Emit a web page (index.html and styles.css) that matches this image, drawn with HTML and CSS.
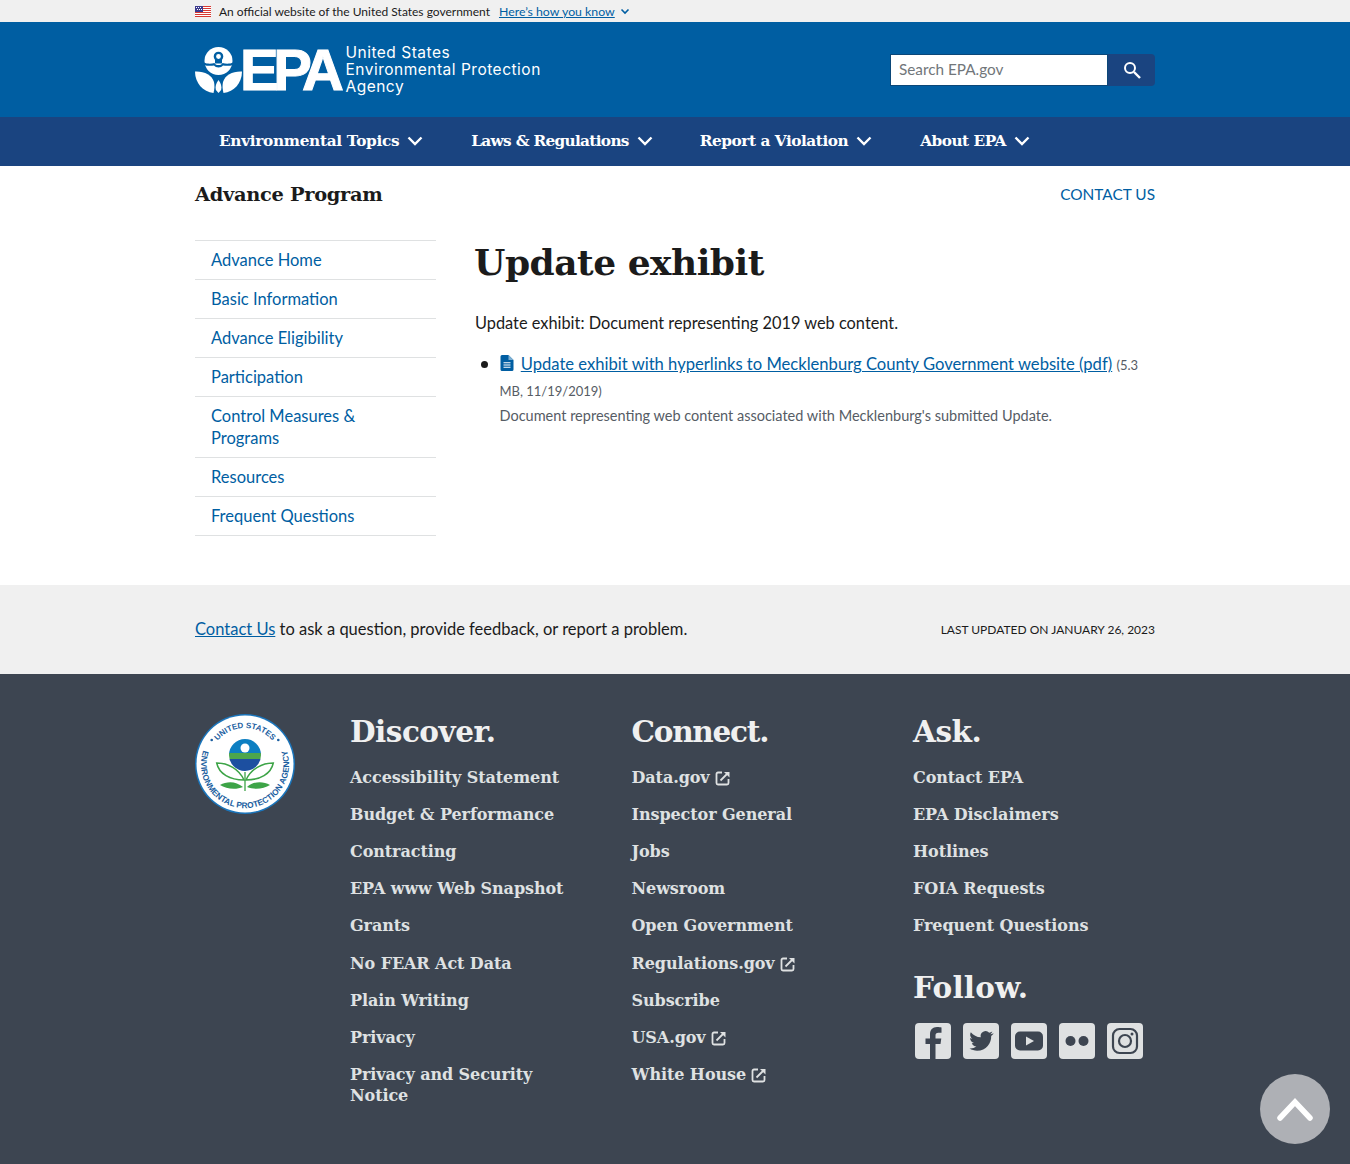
FILE: index.html
```html
<!DOCTYPE html>
<html lang="en">

<head>
    <meta charset="utf-8">
    <title>Update exhibit | Advance Program | US EPA</title>
    <link rel="stylesheet" href="styles.css">
</head>

<body>
    <div class="gov-banner">
        <div class="wrap gov-inner">
            <svg class="flag" width="16" height="11" viewBox="0 0 16 11">
                <rect width="16" height="11" fill="#fff"/>
                <path d="M0 0h16v1H0zM0 2h16v1H0zM0 4h16v1H0zM0 6h16v1H0zM0 8h16v1H0zM0 10h16v1H0z" fill="#d83933"/>
                <rect width="8" height="6" fill="#3c3b8e"/>
                <path d="M1 1h1v1H1zM3 1h1v1H3zM5 1h1v1H5zM2 3h1v1H2zM4 3h1v1H4zM6 3h1v1H6z" fill="#fff"/>
            </svg>
            <span class="gov-text">An official website of the United States government</span>
            <a class="gov-link" href="#">Here’s how you know</a>
            <svg class="gov-caret" width="10" height="10" viewBox="0 0 10 10"><path d="M1.500 3.500 5 7l3.500-3.500" fill="none" stroke="#005ea2" stroke-width="1.600"/></svg>
        </div>
    </div>

    <header class="site-header">
        <div class="wrap header-inner">
            <a class="logo" href="#">
                <svg class="logo-mark" width="47" height="46" viewBox="0 0 47 46">
                    <circle cx="23.500" cy="14" r="14" fill="#fff"/>
                    <path d="M9 15.500c3 1.500 7 1.500 10.500.5.800 1.500 1.500 2 4 2s3.200-.5 4-2c3.500 1 7.500 1 10.500-.5v2.500c-3 1-7 1-10 .5-1 1.300-2.500 2-4.500 2s-3.500-.7-4.500-2c-3 .5-7 .5-10-.5z" fill="#005ea2"/>
                    <circle cx="23.500" cy="9.500" r="3.600" fill="none" stroke="#005ea2" stroke-width="2.400"/>
                    <path d="M20 13h7v3.500h-7z" fill="#005ea2"/>
                    <path d="M0 24.500c9-.5 17 3.500 19 10.500.800 3.500.500 7.500-.500 11C8 45 0 36 0 24.500z" fill="#fff"/>
                    <path d="M47 24.500c-9-.5-17 3.500-19 10.500-.8 3.500-.5 7.500.5 11C39 45 47 36 47 24.500z" fill="#fff"/>
                    <path d="M23.500 33c2.500 3 3.500 7 2.600 10l-2.600 3-2.600-3c-.9-3 .1-7 2.600-10z" fill="#fff"/>
                </svg>
                <span class="logo-epa">EPA</span>
                <span class="logo-name">United States<br>Environmental Protection<br>Agency</span>
            </a>
            <form class="search">
                <input class="search-input" type="text" placeholder="Search EPA.gov">
                <button class="search-btn" type="button" aria-label="Search">
                    <svg width="20" height="20" viewBox="0 0 20 20"><circle cx="8" cy="8" r="5" fill="none" stroke="#fff" stroke-width="2"/><path d="m12 12 6 6" stroke="#fff" stroke-width="2.400"/></svg>
                </button>
            </form>
        </div>
    </header>

    <nav class="main-nav">
        <div class="wrap nav-inner">
            <a class="nav-item nav-topics" href="#">Environmental Topics<svg width="16" height="10" viewBox="0 0 16 10"><path d="m1.500 1.500 6.500 6.500 6.500-6.500" fill="none" stroke="#fff" stroke-width="2.400"/></svg></a>
            <a class="nav-item nav-laws" href="#">Laws &amp; Regulations<svg width="16" height="10" viewBox="0 0 16 10"><path d="m1.500 1.500 6.500 6.500 6.500-6.500" fill="none" stroke="#fff" stroke-width="2.400"/></svg></a>
            <a class="nav-item nav-report" href="#">Report a Violation<svg width="16" height="10" viewBox="0 0 16 10"><path d="m1.500 1.500 6.500 6.500 6.500-6.500" fill="none" stroke="#fff" stroke-width="2.400"/></svg></a>
            <a class="nav-item nav-about" href="#">About EPA<svg width="16" height="10" viewBox="0 0 16 10"><path d="m1.500 1.500 6.500 6.500 6.500-6.500" fill="none" stroke="#fff" stroke-width="2.400"/></svg></a>
        </div>
    </nav>

    <div class="wrap program-bar">
        <div class="program-name">Advance Program</div>
        <a class="program-contact" href="#">CONTACT US</a>
    </div>

    <div class="wrap page-body">
        <ul class="side-nav">
            <li><a href="#">Advance Home</a></li>
            <li><a href="#">Basic Information</a></li>
            <li><a href="#">Advance Eligibility</a></li>
            <li><a href="#">Participation</a></li>
            <li><a href="#">Control Measures &amp; Programs</a></li>
            <li><a href="#">Resources</a></li>
            <li><a href="#">Frequent Questions</a></li>
        </ul>
        <main class="content">
            <h1>Update exhibit</h1>
            <p class="lead">Update exhibit: Document representing 2019 web content.</p>
            <ul class="doc-list">
                <li>
                    <svg class="pdf-icon" width="14" height="16" viewBox="0 0 14 16">
                        <path d="M2 0h6.500L13.500 5v9.500a1.500 1.500 0 0 1-1.500 1.500H2A1.500 1.500 0 0 1 .5 14.500V1.500A1.500 1.500 0 0 1 2 0z" fill="#005ea2"/>
                        <path d="M8.500 0v5h5" fill="#7fb0d3"/>
                        <path d="M3.500 7.800h7M3.500 10h7M3.500 12.200h7" stroke="#fff" stroke-width="1.100"/>
                    </svg>
                    <a href="#">Update exhibit with hyperlinks to Mecklenburg County Government website (pdf)</a>
                    <span class="doc-meta">(5.3 MB, 11/19/2019)</span>
                    <div class="doc-desc">Document representing web content associated with Mecklenburg's submitted Update.</div>
                </li>
            </ul>
        </main>
    </div>

    <div class="contact-band">
        <div class="wrap contact-inner">
            <div class="contact-text"><a href="#">Contact Us</a> to ask a question, provide feedback, or report a problem.</div>
            <div class="updated">LAST UPDATED ON JANUARY 26, 2023</div>
        </div>
    </div>

    <footer class="site-footer">
        <div class="wrap footer-grid">
            <svg class="seal" width="100" height="100" viewBox="0 0 100 100">
                <circle cx="50" cy="50" r="50" fill="#1b75bb"/>
                <circle cx="50" cy="50" r="48.500" fill="#fff"/>
                <defs>
                    <path id="seal-top" d="M14 50A36 36 0 0 1 86 50"/>
                    <path id="seal-bottom" d="M8.700 35A44 44 0 1 0 91.300 35"/>
                    <clipPath id="globe-clip"><circle cx="50" cy="41" r="16"/></clipPath>
                </defs>
                <text class="seal-text"><textPath href="#seal-top" startOffset="50%" text-anchor="middle">UNITED STATES</textPath></text>
                <text class="seal-text seal-text-low"><textPath href="#seal-bottom" startOffset="50%" text-anchor="middle">ENVIRONMENTAL PROTECTION AGENCY</textPath></text>
                <circle cx="16.700" cy="26" r="1.300" fill="#1a5ea0"/>
                <circle cx="83.300" cy="26" r="1.300" fill="#1a5ea0"/>
                <g clip-path="url(#globe-clip)">
                    <rect x="34" y="25" width="32" height="15" fill="#0d7fc2"/>
                    <rect x="34" y="39" width="32" height="6" fill="#4ca64c"/>
                    <rect x="34" y="45" width="32" height="12" fill="#1c4fa0"/>
                </g>
                <circle cx="50" cy="34" r="4.500" fill="#fff"/>
                <path d="M49 66C44 55 33 49 21.700 49 24 60 35 66 49 66zM51 66C56 55 67 49 78.300 49 76 60 65 66 51 66z" fill="#fff" stroke="#3da447" stroke-width="1.500"/>
                <path d="M25 71c7-4 16-4 23 2-7 3-17 2-23-2zM75 71c-7-4-16-4-23 2 7 3 17 2 23-2z" fill="#3da447"/>
                <path d="M50 58v19" stroke="#3da447" stroke-width="1.300"/>
            </svg>
            <div class="footer-col">
                <h2>Discover.</h2>
                <a href="#">Accessibility Statement</a>
                <a href="#">Budget &amp; Performance</a>
                <a href="#">Contracting</a>
                <a href="#">EPA www Web Snapshot</a>
                <a href="#">Grants</a>
                <a href="#">No FEAR Act Data</a>
                <a href="#">Plain Writing</a>
                <a href="#">Privacy</a>
                <a href="#">Privacy and Security Notice</a>
            </div>
            <div class="footer-col">
                <h2 class="connect">Connect.</h2>
                <a href="#">Data.gov<svg class="ext" width="16" height="16" viewBox="0 0 16 16"><use href="#ext-icon"/></svg></a>
                <a href="#">Inspector General</a>
                <a href="#">Jobs</a>
                <a href="#">Newsroom</a>
                <a href="#">Open Government</a>
                <a href="#">Regulations.gov<svg class="ext" width="16" height="16" viewBox="0 0 16 16"><use href="#ext-icon"/></svg></a>
                <a href="#">Subscribe</a>
                <a href="#">USA.gov<svg class="ext" width="16" height="16" viewBox="0 0 16 16"><use href="#ext-icon"/></svg></a>
                <a href="#">White House<svg class="ext" width="16" height="16" viewBox="0 0 16 16"><use href="#ext-icon"/></svg></a>
            </div>
            <div class="footer-col">
                <h2>Ask.</h2>
                <a href="#">Contact EPA</a>
                <a href="#">EPA Disclaimers</a>
                <a href="#">Hotlines</a>
                <a href="#">FOIA Requests</a>
                <a href="#">Frequent Questions</a>
                <h2 class="follow">Follow.</h2>
                <div class="social">
                    <svg width="36" height="36" viewBox="0 0 36 36"><rect width="36" height="36" rx="4" fill="#dfe1e2"/><path d="M20.500 36V21h5l.8-5.500h-5.800v-3c0-1.800.8-2.800 2.800-2.800h3.200V4.500C25.500 4.300 24 4 22 4c-4.500 0-7 2.800-7 7.500v4h-4.500V21H15v15z" fill="#3d4551"/></svg>
                    <svg width="36" height="36" viewBox="0 0 36 36"><rect width="36" height="36" rx="4" fill="#dfe1e2"/><path d="M30 10.500c-.9.400-1.800.700-2.800.800 1-.6 1.800-1.600 2.100-2.700-.9.600-2 1-3.100 1.200a4.900 4.900 0 0 0-8.400 4.500C13.800 14.100 10.200 12.200 7.800 9.200c-1.300 2.200-.6 5.100 1.500 6.500-.8 0-1.500-.2-2.200-.6 0 2.300 1.600 4.400 3.900 4.900-.7.200-1.500.2-2.200.1.600 2 2.500 3.400 4.600 3.400A9.900 9.900 0 0 1 6.500 25.500c2.200 1.400 4.900 2.200 7.600 2.200 9.200 0 14.400-7.800 14.100-14.800 1-.7 1.800-1.500 2.500-2.400z" fill="#3d4551"/></svg>
                    <svg width="36" height="36" viewBox="0 0 36 36"><rect width="36" height="36" rx="4" fill="#dfe1e2"/><rect x="4" y="8.500" width="28" height="19" rx="5" fill="#3d4551"/><path d="m15 13.500 8 4.500-8 4.500z" fill="#dfe1e2"/></svg>
                    <svg width="36" height="36" viewBox="0 0 36 36"><rect width="36" height="36" rx="4" fill="#dfe1e2"/><circle cx="11.500" cy="18" r="5" fill="#3d4551"/><circle cx="24.500" cy="18" r="5" fill="#3d4551"/></svg>
                    <svg width="36" height="36" viewBox="0 0 36 36"><rect width="36" height="36" rx="4" fill="#dfe1e2"/><rect x="6" y="6" width="24" height="24" rx="6.500" fill="none" stroke="#3d4551" stroke-width="2.200"/><circle cx="18" cy="18" r="6" fill="none" stroke="#3d4551" stroke-width="2.200"/><circle cx="25" cy="11" r="1.500" fill="#3d4551"/></svg>
                </div>
            </div>
        </div>
        <svg class="icon-defs" width="0" height="0">
            <symbol id="ext-icon" viewBox="0 0 16 16">
                <path d="M7 2.500H3A1.500 1.500 0 0 0 1.500 4v9A1.500 1.500 0 0 0 3 14.500h9a1.500 1.500 0 0 0 1.500-1.500V9" fill="none" stroke="#dfe1e2" stroke-width="1.800"/>
                <path d="M5.500 10.500 12 4" fill="none" stroke="#dfe1e2" stroke-width="1.800"/>
                <path d="M9 2h5.500v5.500z" fill="#dfe1e2"/>
            </symbol>
        </svg>
    </footer>

    <a class="back-top" href="#" aria-label="Back to top">
        <svg width="36" height="24" viewBox="0 0 36 24"><path d="M3 21 18 5l15 16" fill="none" stroke="#fff" stroke-width="5.500" stroke-linecap="round"/></svg>
    </a>
</body>

</html>
```
FILE: styles.css
```css
* {
    box-sizing: border-box;
}

html,
body {
    margin: 0;
    padding: 0;
}

body {
    font-family: Lato, "Open Sans", sans-serif;
    font-size: 16.5px;
    color: #1b1b1b;
    background: #fff;
    height: 1164px;
    overflow: hidden;
}

a {
    color: #005ea2;
}

.wrap {
    width: 960px;
    margin: 0 auto;
}

/* gov banner */
.gov-banner {
    height: 22px;
    background: #f0f0f0;
}

.gov-inner {
    display: flex;
    align-items: center;
    height: 22px;
    font-size: 12px;
}

.flag {
    margin-right: 8px;
}

.gov-link {
    margin-left: 9px;
    font-size: 12.300px;
}

.gov-caret {
    margin-left: 5px;
}

/* header */
.site-header {
    height: 95px;
    background: #005ea2;
}

.header-inner {
    display: flex;
    align-items: center;
    justify-content: space-between;
    height: 95px;
}

.logo {
    display: flex;
    align-items: center;
    color: #fff;
    text-decoration: none;
}

.logo-epa {
    font-family: "Liberation Sans", sans-serif;
    font-weight: 700;
    font-size: 58px;
    line-height: 46px;
    letter-spacing: -5.500px;
    -webkit-text-stroke: 1px #fff;
    margin-left: -2px;
}

.logo-name {
    font-family: Inter, sans-serif;
    font-size: 15.500px;
    line-height: 17px;
    letter-spacing: .5px;
    margin-left: 7px;
}

.search {
    display: flex;
    height: 32px;
}

.search-input {
    width: 218px;
    height: 32px;
    border: 1px solid #0b4778;
    padding: 0 8px 1px;
    font-family: Lato, sans-serif;
    font-size: 15.300px;
    background: #fff;
}

.search-input::placeholder {
    color: #71767a;
}

.search-btn {
    width: 47px;
    height: 32px;
    border: 0;
    padding: 0;
    background: #1a4480;
    border-radius: 0 4px 4px 0;
    display: flex;
    align-items: center;
    justify-content: center;
}

/* main nav */
.main-nav {
    height: 49px;
    background: #1a4480;
}

.nav-inner {
    display: flex;
    align-items: center;
    height: 48px;
    padding-left: 24px;
}

.nav-item {
    display: flex;
    align-items: center;
    font-family: "DejaVu Serif", serif;
    font-weight: 700;
    font-size: 15.300px;
    letter-spacing: -.3px;
    color: #fff;
    text-decoration: none;
    margin-right: 48px;
}

.nav-laws {
    letter-spacing: -.68px;
    margin-right: 47px;
}

.nav-report {
    letter-spacing: -.45px;
}

.nav-about {
    letter-spacing: -.5px;
}

.nav-item svg {
    margin-left: 8px;
}

/* program bar */
.program-bar {
    display: flex;
    align-items: center;
    justify-content: space-between;
    height: 56px;
}

.program-name {
    font-family: "DejaVu Serif", serif;
    font-weight: 700;
    font-size: 19.400px;
    letter-spacing: -.3px;
}

.program-contact {
    font-size: 15.400px;
    text-decoration: none;
}

/* page body */
.page-body {
    display: flex;
    height: 363px;
    padding-top: 18px;
}

.side-nav {
    list-style: none;
    flex: none;
    width: 241px;
    margin: 0 39px 0 0;
    padding: 0;
    border-top: 1px solid #dfe1e2;
    align-self: flex-start;
}

.side-nav li {
    border-bottom: 1px solid #dfe1e2;
    padding: 8px 70px 8px 16px;
    line-height: 22px;
}

.side-nav a {
    text-decoration: none;
}

.content {
    flex: 1;
}

h1 {
    font-family: "DejaVu Serif", serif;
    font-size: 36px;
    font-weight: 700;
    letter-spacing: -.5px;
    line-height: 44px;
    margin: 0 0 0 -1px;
}

.lead {
    margin: 27px 0 0;
    font-size: 16.350px;
    line-height: 24px;
}

.doc-list {
    list-style: none;
    margin: 16px 0 0;
    padding-left: 24.500px;
}

.doc-list li {
    position: relative;
    line-height: 26px;
    font-size: 16.600px;
}

.doc-list li::before {
    content: "";
    position: absolute;
    left: -19px;
    top: 10px;
    width: 7px;
    height: 7px;
    border-radius: 50%;
    background: #1b1b1b;
}

.pdf-icon {
    vertical-align: -1px;
    margin-right: 3px;
}

.doc-meta {
    font-size: 13px;
    line-height: 1;
    color: #565c65;
}

.doc-desc {
    font-size: 14.500px;
    color: #565c65;
}

/* contact band */
.contact-band {
    height: 89px;
    background: #f0f0f0;
}

.contact-inner {
    display: flex;
    align-items: center;
    justify-content: space-between;
    height: 87px;
}

.updated {
    font-size: 12px;
    padding-top: 1px;
}

/* footer */
.site-footer {
    height: 490px;
    background: #3d4551;
}

.footer-grid {
    display: flex;
    padding-top: 40px;
}

.seal {
    flex: none;
    margin-right: 55px;
}

.seal-text {
    font-family: "Liberation Sans", sans-serif;
    font-size: 8px;
    font-weight: 700;
    fill: #1a5ea0;
}

.seal-text-low {
    font-size: 8.300px;
}

.footer-col {
    flex: none;
    width: 281.500px;
    padding-right: 40px;
}

.footer-col h2 {
    font-family: "DejaVu Serif", serif;
    font-size: 29.500px;
    font-weight: 700;
    letter-spacing: -.5px;
    line-height: 36px;
    color: #f0f0f0;
    margin: 0 0 17px;
}

.footer-col a {
    display: block;
    font-family: "DejaVu Serif", serif;
    font-size: 16px;
    font-weight: 700;
    letter-spacing: -.08px;
    line-height: 21px;
    color: #dfe1e2;
    text-decoration: none;
    margin-bottom: 16.120px;
}

.footer-col h2.connect {
    letter-spacing: -1.250px;
}

.footer-col h2.follow {
    margin-top: 34px;
    letter-spacing: .2px;
}

.ext {
    margin-left: 5px;
    vertical-align: -3px;
}

.social {
    display: flex;
    gap: 12px;
    margin: 4px 0 0 2px;
}

.icon-defs {
    position: absolute;
}

.back-top {
    position: fixed;
    right: 20px;
    bottom: 20px;
    width: 70px;
    height: 70px;
    border-radius: 50%;
    background: #aeb0b5;
    display: flex;
    align-items: center;
    justify-content: center;
}
```
